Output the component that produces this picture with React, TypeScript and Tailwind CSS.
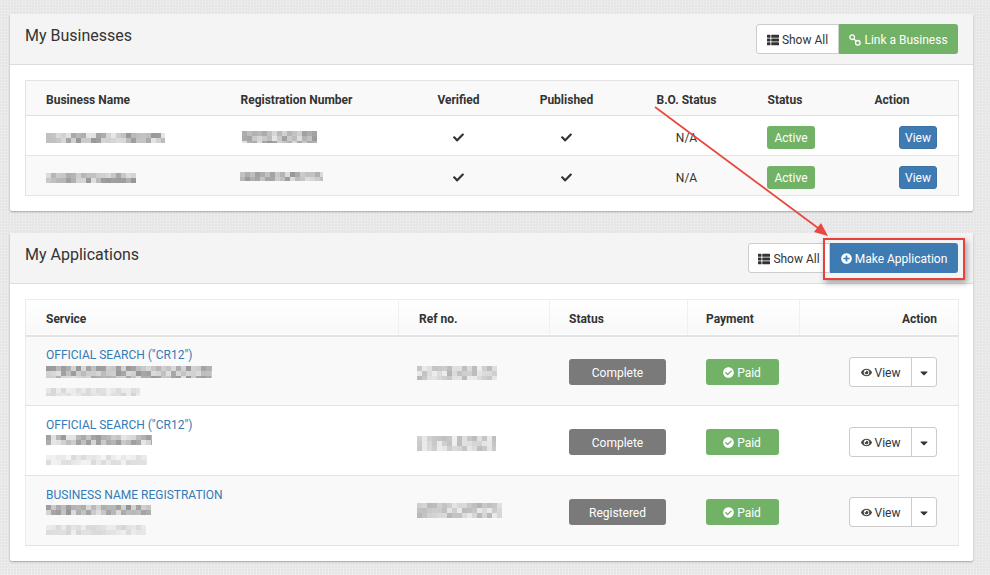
import { FaCaretDown, FaCheck, FaCheckCircle, FaEye, FaPlusCircle, FaThList } from "react-icons/fa";

// pixelated block standing in for the redacted text
function Mosaic({ w, h, cell = 5, seed = 1, dark = 0.5, light = 0.12, soft = false }: { w: number; h: number; cell?: number; seed?: number; dark?: number; light?: number; soft?: boolean }) {
    const cells = [];
    let n = seed * 7919;
    for (let y = 0; y < h; y += cell) {
        for (let x = 0; x < w; x += cell) {
            n = (n * 1103515245 + 12345) % 2147483648;
            const o = light + ((n >> 8) % 100) / 100 * (dark - light);
            cells.push(<rect key={x + "-" + y} x={x} y={y} width={cell} height={cell} fill="#333" opacity={o} />);
        }
    }
    return (
        <svg width={w} height={h} className={soft ? "block blur-[0.6px]" : "block"} shapeRendering="crispEdges">
            {cells}
        </svg>
    );
}

function Card({ title, actions, mt, children }: { title: string; actions: React.ReactNode; mt: string; children: React.ReactNode }) {
    return (
        <section className={`${mt} bg-white rounded-[2px] shadow-[0_1px_2px_rgba(0,0,0,0.3)]`}>
            <header className="h-[51px] bg-[#f4f4f4] border-b border-[#dcdcdc] pl-[15px] pr-[15px] flex items-center justify-between">
                <h2 className="text-[16px] leading-none text-[#333] -mt-[6px]">{title}</h2>
                <div className="flex -mt-[1px]">{actions}</div>
            </header>
            <div className="px-[15px] pt-[15px] pb-[15px]">{children}</div>
        </section>
    );
}

const businesses = [
    { name: [119, 10, 3], reg: [75, 12, 4], regOffset: "ml-[1px]", bg: "bg-white" },
    { name: [90, 10, 5], reg: [83, 9, 6], regOffset: "-ml-[1px]", bg: "bg-[#f9f9f9]" },
];

const applications = [
    { service: 'OFFICIAL SEARCH ("CR12")', status: "Complete", name: [166, 12, 11], sub: [94, 8, 12], ref: [80, 14, 13], bg: "bg-[#f9f9f9]", refPad: "pt-[5px]" },
    { service: 'OFFICIAL SEARCH ("CR12")', status: "Complete", name: [106, 10, 14], sub: [101, 10, 15], ref: [79, 15, 16], bg: "bg-white", refPad: "pt-[6px]" },
    { service: "BUSINESS NAME REGISTRATION", status: "Registered", name: [105, 10, 17], sub: [100, 10, 18], ref: [85, 15, 19], bg: "bg-[#f9f9f9]", refPad: "pt-0" },
];

export default function App() {
    return (
        <div className="relative h-[575px] w-[990px] overflow-hidden bg-[#e7e7e7] bg-[radial-gradient(#f5f5f5_1px,transparent_1px)] bg-[length:3px_3px] px-[10px] pt-[14px] pr-[17px] font-['Roboto',sans-serif] text-[12px] text-[#333]">
            <Card
                title="My Businesses"
                mt=""
                actions={
                    <>
                        <button className="h-[30px] w-[83px] flex items-center justify-center gap-[3px] pt-[2px] bg-white border border-[#ccc] rounded-l-[3px]">
                            <FaThList className="text-[12px]" /> Show All
                        </button>
                        <button className="h-[30px] w-[119px] flex items-center justify-center gap-[3px] pt-[2px] bg-[#72b266] text-white rounded-r-[3px]">
                            <svg width="12" height="12" viewBox="0 0 12 12" fill="none" stroke="currentColor" strokeWidth="1.3">
                                <circle cx="3.2" cy="3.2" r="2.3" />
                                <circle cx="8.8" cy="8.8" r="2.3" />
                                <path d="M4.8 4.8l2.4 2.4" />
                            </svg>
                            Link a Business
                        </button>
                    </>
                }
            >
                <table className="w-[933px] table-fixed border-collapse border border-[#e4e4e4]">
                    <colgroup>
                        <col className="w-[195px]" />
                        <col className="w-[184px]" />
                        <col className="w-[108px]" />
                        <col className="w-[108px]" />
                        <col className="w-[132px]" />
                        <col className="w-[103px]" />
                        <col className="w-[103px]" />
                    </colgroup>
                    <thead>
                        <tr className="h-[35px] bg-[#f9f9f9] border-b border-[#e0e0e0] font-bold">
                            <th className="pl-[20px] pt-[3px] text-left">Business Name</th>
                            <th className="pl-[20px] pt-[3px] text-left">Registration Number</th>
                            <th className="pt-[3px] text-center">Verified</th>
                            <th className="pt-[3px] text-center">Published</th>
                            <th className="pt-[3px] text-center">B.O. Status</th>
                            <th className="pl-[15px] pt-[3px] text-left">Status</th>
                            <th className="pl-[19px] pt-[3px] text-left">Action</th>
                        </tr>
                    </thead>
                    <tbody>
                        {businesses.map((b, i) => (
                            <tr key={i} className={`h-[40px] border-b border-[#e4e4e4] ${b.bg}`}>
                                <td className="pl-[20px] pt-[4px]">
                                    <Mosaic w={b.name[0]} h={b.name[1]} seed={b.name[2]} />
                                </td>
                                <td className="pl-[20px] pt-[2px]">
                                    <div className={b.regOffset}>
                                        <Mosaic w={b.reg[0]} h={b.reg[1]} seed={b.reg[2]} />
                                    </div>
                                </td>
                                <td className="pt-[4px]">
                                    <FaCheck className="mx-auto text-[11px] text-[#333]" />
                                </td>
                                <td className="pt-[4px]">
                                    <FaCheck className="mx-auto text-[11px] text-[#333]" />
                                </td>
                                <td className="pt-[4px] text-center">N/A</td>
                                <td className="pl-[14px] pt-[4px]">
                                    <span className="inline-flex h-[23px] w-[48px] items-center justify-center pl-[1px] rounded-[3px] bg-[#72b266] text-white">Active</span>
                                </td>
                                <td className="pr-[21px] pt-[4px] text-right">
                                    <button className="inline-flex h-[23px] w-[38px] items-center justify-center rounded-[3px] border border-[#3a72a6] bg-[#3f7bb3] text-white">View</button>
                                </td>
                            </tr>
                        ))}
                    </tbody>
                </table>
            </Card>

            <Card
                title="My Applications"
                mt="mt-[22px]"
                actions={
                    <>
                        <button className="h-[30px] w-[82px] flex items-center justify-center gap-[3px] pt-[2px] bg-white border border-[#ccc] rounded-l-[3px]">
                            <FaThList className="text-[12px]" /> Show All
                        </button>
                        <button className="h-[30px] w-[128px] flex items-center justify-center gap-[3px] pt-[2px] bg-[#3f7bb3] text-white rounded-r-[3px]">
                            <FaPlusCircle className="text-[11px]" /> Make Application
                        </button>
                    </>
                }
            >
                <table className="w-[933px] table-fixed border-collapse border border-[#ececec]">
                    <colgroup>
                        <col className="w-[373px]" />
                        <col className="w-[151px]" />
                        <col className="w-[138px]" />
                        <col className="w-[112px]" />
                        <col className="w-[159px]" />
                    </colgroup>
                    <thead>
                        <tr className="h-[36px] border-b-[2px] border-[#e2e2e2] bg-gradient-to-b from-white to-[#f8f8f8] font-bold">
                            <th className="pl-[20px] pt-[3px] text-left border-r border-[#f0f0f0]">Service</th>
                            <th className="pl-[20px] pt-[3px] text-left border-r border-[#f0f0f0]">Ref no.</th>
                            <th className="pl-[19px] pt-[3px] text-left border-r border-[#f0f0f0]">Status</th>
                            <th className="pl-[18px] pt-[3px] text-left border-r border-[#f0f0f0]">Payment</th>
                            <th className="pr-[21px] pt-[3px] text-right">Action</th>
                        </tr>
                    </thead>
                    <tbody>
                        {applications.map((a, i) => (
                            <tr key={i} className={`h-[70px] border-b border-[#e2e2e2] ${a.bg}`}>
                                <td className={`pl-[20px] align-top ${i === 0 ? "pt-[11px]" : "pt-[12px]"}`}>
                                    <a className="block text-[12px] leading-[14px] text-[#337ab7]">{a.service}</a>
                                    <div className={i === 0 ? "mt-[4px]" : "mt-[3px]"}>
                                        <Mosaic w={a.name[0]} h={a.name[1]} seed={a.name[2]} soft />
                                    </div>
                                    <div className="mt-[10px]">
                                        <Mosaic w={a.sub[0]} h={a.sub[1]} seed={a.sub[2]} dark={0.18} light={0.05} soft />
                                    </div>
                                </td>
                                <td className={`pl-[18px] ${a.refPad}`}>
                                    <Mosaic w={a.ref[0]} h={a.ref[1]} seed={a.ref[2]} dark={0.35} light={0.06} soft />
                                </td>
                                <td className="pl-[19px] pt-[2px]">
                                    <span className="flex h-[26px] w-[97px] items-center justify-center pt-[2px] pl-[1px] rounded-[3px] bg-[#7a7a7a] text-white">{a.status}</span>
                                </td>
                                <td className="pl-[18px] pt-[2px]">
                                    <span className="flex h-[26px] w-[73px] items-center justify-center gap-[3px] pt-[2px] rounded-[3px] bg-[#72b266] text-white">
                                        <FaCheckCircle className="text-[11px]" /> Paid
                                    </span>
                                </td>
                                <td className="pr-[21px] pt-[2px]">
                                    <div className="ml-auto flex h-[30px] w-[88px] rounded-[3px] border border-[#ccc] bg-white">
                                        <button className="flex w-[62px] items-center justify-center gap-[3px] pt-[2px] border-r border-[#ccc]">
                                            <FaEye className="text-[11px] text-[#444]" /> View
                                        </button>
                                        <button className="flex flex-1 items-center justify-center pt-[2px]">
                                            <FaCaretDown className="text-[12px]" />
                                        </button>
                                    </div>
                                </td>
                            </tr>
                        ))}
                    </tbody>
                </table>
            </Card>

            {/* annotation drawn over the page */}
            <div className="absolute left-[823px] top-[238px] h-[42px] w-[142px] border-2 border-[#e8403a] shadow-[2px_3px_6px_rgba(0,0,0,0.35)]" />
            <svg className="absolute left-0 top-0 pointer-events-none" width="990" height="575">
                <line x1="655" y1="107" x2="818" y2="228" stroke="#e8483f" strokeWidth="1.7" />
                <polygon points="828,236 814,232 821,223" fill="#e8483f" />
            </svg>
        </div>
    );
}
